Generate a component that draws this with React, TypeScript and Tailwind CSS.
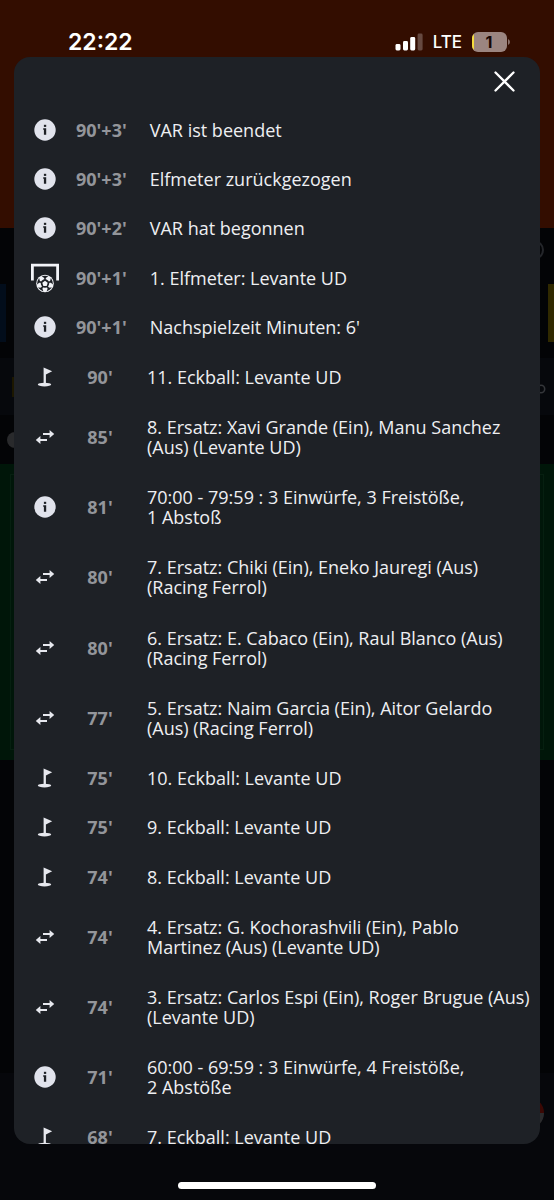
import React from "react";

type Kind = "info" | "penalty" | "corner" | "sub";
type MatchEvent = { kind: Kind; time: string; text: string };

const events: MatchEvent[] = [
  { kind: "info", time: "90'+3'", text: "VAR ist beendet" },
  { kind: "info", time: "90'+3'", text: "Elfmeter zurückgezogen" },
  { kind: "info", time: "90'+2'", text: "VAR hat begonnen" },
  { kind: "penalty", time: "90'+1'", text: "1. Elfmeter: Levante UD" },
  { kind: "info", time: "90'+1'", text: "Nachspielzeit Minuten: 6'" },
  { kind: "corner", time: "90'", text: "11. Eckball: Levante UD" },
  { kind: "sub", time: "85'", text: "8. Ersatz: Xavi Grande (Ein), Manu Sanchez\n(Aus) (Levante UD)" },
  { kind: "info", time: "81'", text: "70:00 - 79:59 : 3 Einwürfe, 3 Freistöße,\n1 Abstoß" },
  { kind: "sub", time: "80'", text: "7. Ersatz: Chiki (Ein), Eneko Jauregi (Aus)\n(Racing Ferrol)" },
  { kind: "sub", time: "80'", text: "6. Ersatz: E. Cabaco (Ein), Raul Blanco (Aus)\n(Racing Ferrol)" },
  { kind: "sub", time: "77'", text: "5. Ersatz: Naim Garcia (Ein), Aitor Gelardo\n(Aus) (Racing Ferrol)" },
  { kind: "corner", time: "75'", text: "10. Eckball: Levante UD" },
  { kind: "corner", time: "75'", text: "9. Eckball: Levante UD" },
  { kind: "corner", time: "74'", text: "8. Eckball: Levante UD" },
  { kind: "sub", time: "74'", text: "4. Ersatz: G. Kochorashvili (Ein), Pablo\nMartinez (Aus) (Levante UD)" },
  { kind: "sub", time: "74'", text: "3. Ersatz: Carlos Espi (Ein), Roger Brugue (Aus)\n(Levante UD)" },
  { kind: "info", time: "71'", text: "60:00 - 69:59 : 3 Einwürfe, 4 Freistöße,\n2 Abstöße" },
  { kind: "corner", time: "68'", text: "7. Eckball: Levante UD" },
];

function EventIcon({ kind }: { kind: Kind }) {
  if (kind === "info") {
    return (
      <svg width="22" height="22" viewBox="0 0 22 22" aria-hidden="true">
        <circle cx="11" cy="11" r="10.7" fill="#e1e3ec" />
        <rect x="9.9" y="5.8" width="2.3" height="2.1" fill="#1e2126" />
        <path d="M9.2 9.2h3v6.6H9.9v-5h-.7z" fill="#1e2126" />
      </svg>
    );
  }
  if (kind === "penalty") {
    return (
      <svg width="30" height="30" viewBox="0 0 30 30" aria-hidden="true">
        <path d="M2.4 17.5V2.2h25.2v15.3" fill="none" stroke="#f3f4f8" strokeWidth="2.8" />
        <circle cx="15" cy="20.5" r="8.8" fill="#f3f4f8" />
        <g fill="#1e2126">
          <path d="M11.6 13.2l3.4 2.2 3.4-2.2-3.4-.5z" />
          <path d="M11.6 13.2l3.4 2.2 3.4-2.2-3.4-.5z" transform="rotate(72 15 20.5)" />
          <path d="M11.6 13.2l3.4 2.2 3.4-2.2-3.4-.5z" transform="rotate(144 15 20.5)" />
          <path d="M11.6 13.2l3.4 2.2 3.4-2.2-3.4-.5z" transform="rotate(216 15 20.5)" />
          <path d="M11.6 13.2l3.4 2.2 3.4-2.2-3.4-.5z" transform="rotate(288 15 20.5)" />
          <circle cx="15" cy="20.5" r="4.2" />
        </g>
        <g stroke="#1e2126" strokeWidth="1.5">
          <path d="M15 14v4" />
          <path d="M15 14v4" transform="rotate(72 15 20.5)" />
          <path d="M15 14v4" transform="rotate(144 15 20.5)" />
          <path d="M15 14v4" transform="rotate(216 15 20.5)" />
          <path d="M15 14v4" transform="rotate(288 15 20.5)" />
        </g>
        <path d="M15 17.8l2.7 2-1 3.1h-3.4l-1-3.1z" fill="#f3f4f8" />
      </svg>
    );
  }
  if (kind === "corner") {
    return (
      <svg width="20" height="22" viewBox="0 0 20 22" aria-hidden="true">
        <ellipse cx="9.5" cy="18.6" rx="6.7" ry="1.8" fill="#e7e8ee" />
        <path d="M8.6 1.4l8.6 3.8-6.3 3.4v9.8H8.6z" fill="#e7e8ee" />
      </svg>
    );
  }
  return (
    <svg width="20" height="16" viewBox="0 0 20 16" aria-hidden="true">
      <path d="M8 5h7M12 11H5" stroke="#e7e8ee" strokeWidth="2" />
      <path d="M14.6 1L19.2 5l-4.6 4zM5.4 7L.8 11l4.6 4z" fill="#e7e8ee" />
    </svg>
  );
}

function EventRow({ event }: { event: MatchEvent }) {
  const basis = event.text.includes("\n") ? "basis-[70px]" : "basis-[49px]";
  return (
    <li className={`flex shrink-0 grow items-center pl-4 ${basis}`}>
      <span className="flex w-[30px] shrink-0 justify-center">
        <EventIcon kind={event.kind} />
      </span>
      <span className="ml-4 min-w-12 shrink-0 text-center font-bold text-[#93959a]">
        {event.time}
      </span>
      <span className="ml-[23px] whitespace-pre text-[#eeeff2]">{event.text}</span>
    </li>
  );
}

function StatusBar() {
  return (
    <header className="flex h-[57px] shrink-0 items-center justify-between pr-[44px] pl-[68px] pt-[26px] text-white">
      <span className="font-[Inter,sans-serif] text-[23px] font-semibold">22:22</span>
      <span className="flex items-center">
        <svg width="28" height="18" viewBox="0 0 28 18" aria-hidden="true">
          <g fill="#fff">
            <rect x="0.5" y="11" width="5" height="6.5" rx="1.4" />
            <rect x="8" y="8" width="5" height="9.5" rx="1.4" />
            <rect x="15.2" y="4" width="5" height="13.5" rx="1.4" />
            <rect x="22.6" y="0.5" width="5" height="17" rx="1.4" opacity="0.25" />
          </g>
        </svg>
        <span className="ml-2.5 font-[Inter,sans-serif] text-[17px] font-medium">LTE</span>
        <svg className="ml-2.5" width="38" height="20" viewBox="0 0 38 20" role="img" aria-label="1 %">
          <rect width="35" height="20" rx="6" fill="#9b8580" />
          <path d="M2 2Q0 4 0 6v8q0 2 2 4z" fill="#f5dc3c" />
          <path d="M36 7q2 1 2 3t-2 3z" fill="#8a716b" />
          <text x="17" y="16" textAnchor="middle" fill="#160604" fontFamily="Inter" fontSize="16" fontWeight="700">
            1
          </text>
        </svg>
      </span>
    </header>
  );
}

function Backdrop() {
  return (
    <div className="flex flex-col overflow-hidden bg-[#030406] [grid-area:1/1]" aria-hidden="true">
      <div className="h-[228px] shrink-0 bg-[#330d00]" />
      <div className="flex h-14 shrink-0 items-start justify-end pt-3">
        <span className="mr-2.5 size-5 rounded-full border-2 border-[#24262a]" />
      </div>
      <div className="flex h-[58px] shrink-0 justify-between">
        <div className="w-1.5 bg-[#020d1b]" />
        <div className="w-1.5 bg-[#302900]" />
      </div>
      <div className="mt-4 flex h-[57px] shrink-0 items-center justify-between bg-[#06080c] pl-3">
        <span className="h-5 w-2 bg-[#1c1700]" />
        <svg className="mr-2 mt-1" width="10" height="10" viewBox="0 0 10 10">
          <circle cx="5" cy="5" r="3.7" fill="none" stroke="#34363a" strokeWidth="1.6" />
        </svg>
      </div>
      <div className="flex h-[49px] shrink-0 items-center pl-[7px]">
        <span className="size-4 rounded-full bg-[#292a2c]" />
      </div>
      <div className="h-[296px] shrink-0 bg-[#001609] px-2.5 py-2.5">
        <div className="h-full border border-[#061f10]" />
      </div>
      <div className="h-[313px] shrink-0" />
      <div className="flex grow items-start justify-end bg-[#06070b] pr-2.5 pt-6">
        <span className="size-8 rounded-full bg-linear-to-b from-[#3b0804] from-50% to-[#2b2b2d] to-50%" />
      </div>
    </div>
  );
}

export default function App() {
  return (
    <div className="grid h-screen grid-cols-1 grid-rows-1 font-['Open_Sans','Noto_Sans',sans-serif] text-[18px] leading-[20px]">
      <Backdrop />
      <div className="z-10 flex min-h-0 flex-col [grid-area:1/1]">
        <StatusBar />
        <main role="dialog" aria-label="Spielereignisse" className="mx-[14px] flex min-h-0 flex-1 flex-col overflow-hidden rounded-2xl bg-[#1e2126]">
          <div className="flex h-12 shrink-0 items-center justify-end pr-[25px]">
            <button type="button" aria-label="Schließen" className="text-white">
              <svg width="21" height="21" viewBox="0 0 21 21" aria-hidden="true">
                <path d="M1.5 1.5l18 18M19.5 1.5l-18 18" stroke="currentColor" strokeWidth="2.3" strokeLinecap="round" />
              </svg>
            </button>
          </div>
          <ul className="-mb-[18px] flex flex-1 flex-col">
            {events.map((event, i) => (
              <EventRow key={i} event={event} />
            ))}
          </ul>
        </main>
        <div className="flex h-14 shrink-0 items-center justify-center pt-[26px]">
          <div className="h-[7px] w-[198px] rounded-full bg-white" />
        </div>
      </div>
    </div>
  );
}
